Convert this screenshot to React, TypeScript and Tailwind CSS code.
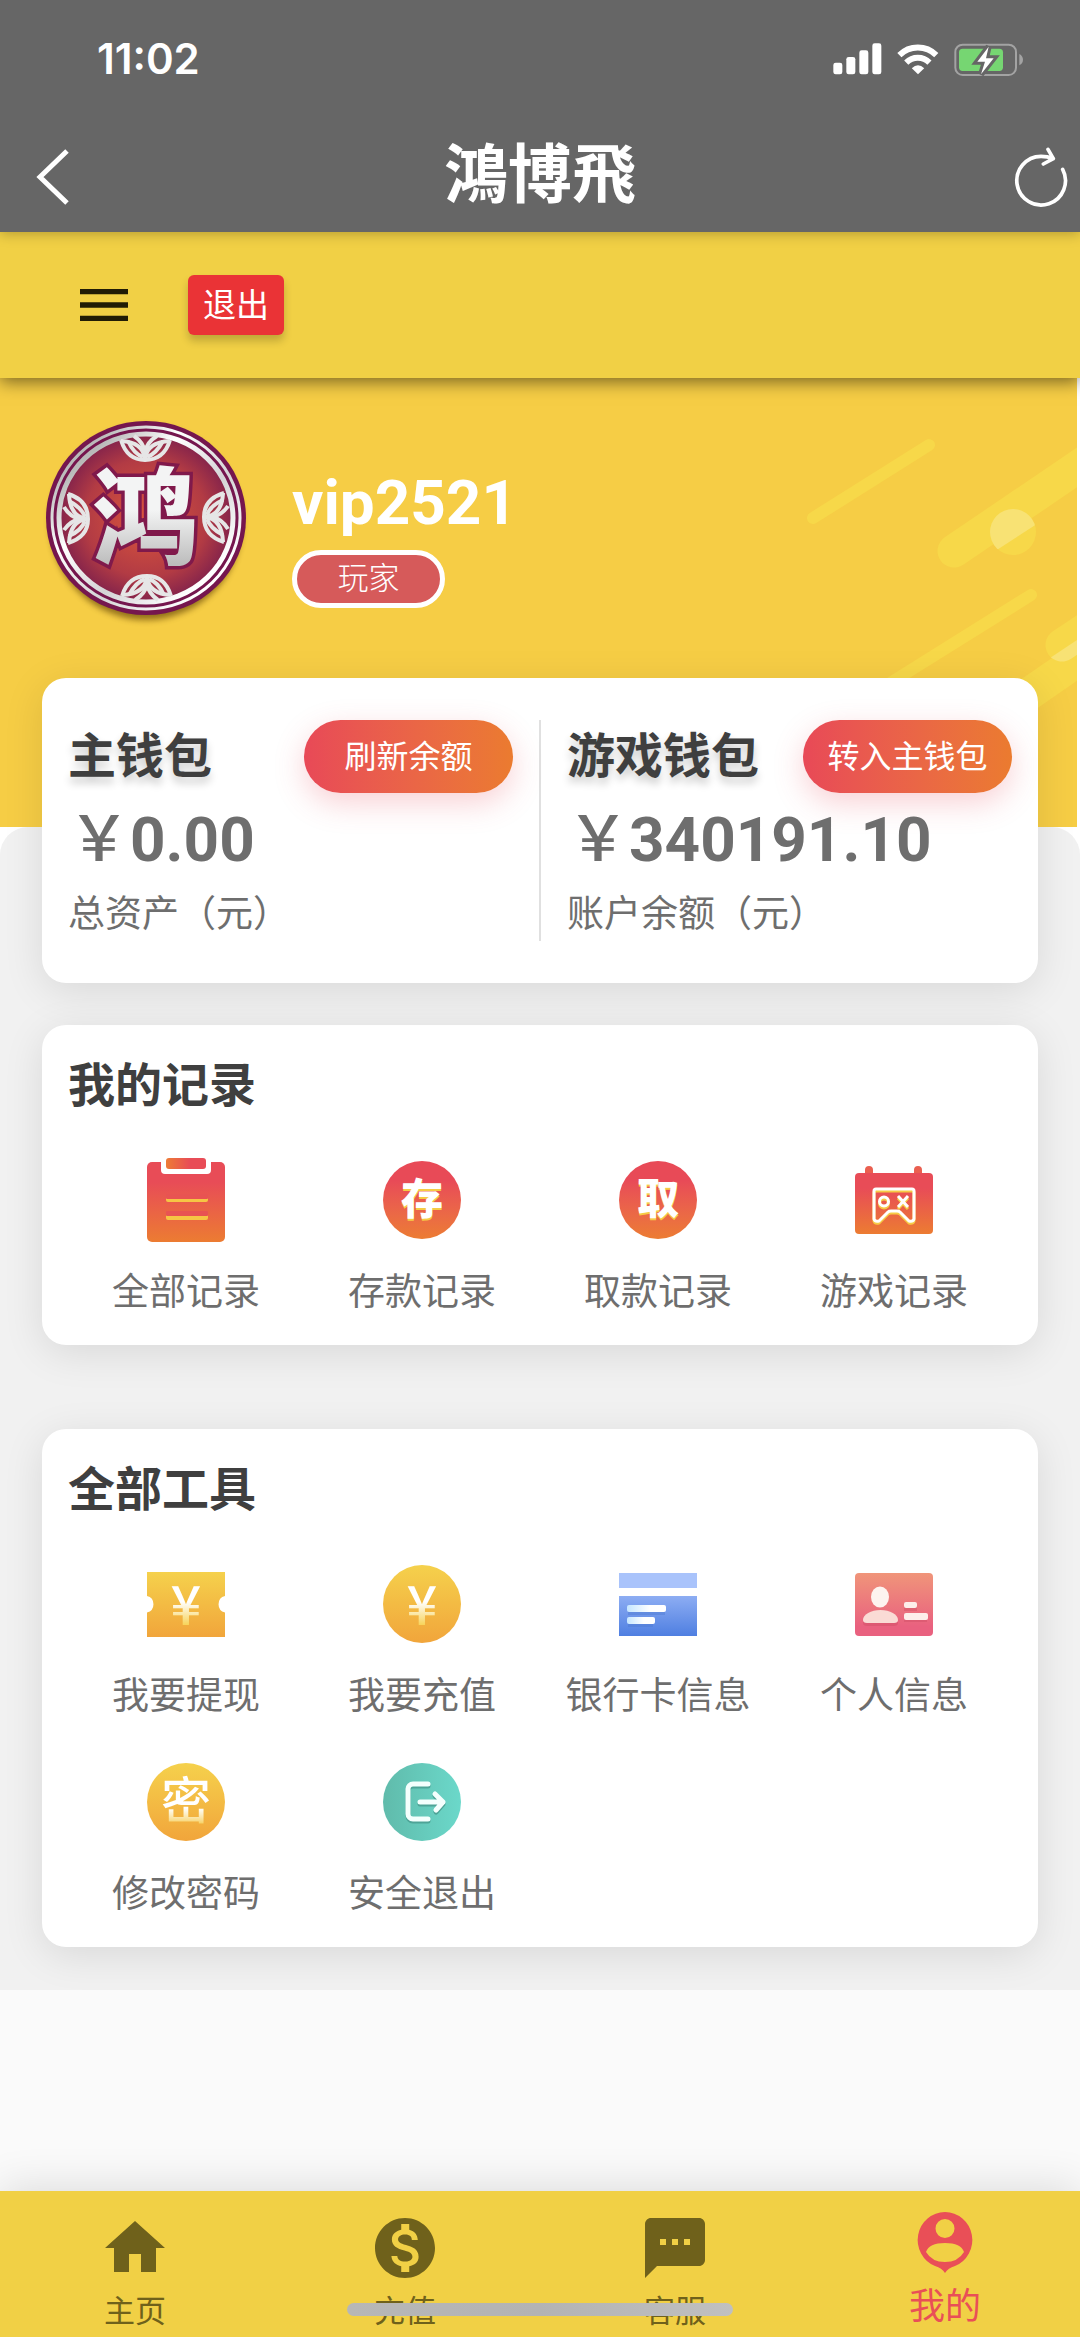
import type { ReactNode } from "react";
import { MdHome, MdMenu, MdMonetizationOn, MdTextsms } from "react-icons/md";

const redOrange = "bg-linear-to-b from-[#e84a57] from-25% to-[#ec7c32]";
const gold = "bg-linear-to-b from-[#f5d14c] to-[#f1a53b]";

function IconBox({ children }: { children: ReactNode }) {
    return (
        <svg viewBox="0 0 84 84" className="size-[84px]" aria-hidden="true">
            {children}
        </svg>
    );
}

// Gradients shared by every icon on the page
function IconGradients() {
    return (
        <svg className="absolute size-0" aria-hidden="true">
            <defs>
                <linearGradient id="red" x1="0" y1="0" x2="0" y2="1">
                    <stop offset="0.25" stopColor="#e84c57" />
                    <stop offset="1" stopColor="#ec7c32" />
                </linearGradient>
                <linearGradient id="gold" x1="0" y1="0" x2="0" y2="1">
                    <stop stopColor="#f5d14c" />
                    <stop offset="1" stopColor="#f1a53b" />
                </linearGradient>
                <linearGradient id="yen" x1="0" y1="0" x2="0" y2="1">
                    <stop offset="0.5" stopColor="#fff" />
                    <stop offset="0.8" stopColor="#f7d358" />
                </linearGradient>
                <linearGradient id="blue" x1="0" y1="0" x2="0" y2="1">
                    <stop stopColor="#8dadf3" />
                    <stop offset="1" stopColor="#4f7fe1" />
                </linearGradient>
                <linearGradient id="shine" x1="0" y1="0" x2="1" y2="0">
                    <stop stopColor="#c5e6ff" />
                    <stop offset="0.6" stopColor="#fff" />
                </linearGradient>
                <linearGradient id="pink" x1="0" y1="0" x2="0" y2="1">
                    <stop stopColor="#f0957a" />
                    <stop offset="0.85" stopColor="#e9617f" />
                </linearGradient>
                <linearGradient id="teal" x1="0" y1="0" x2="1" y2="0">
                    <stop stopColor="#60bbab" />
                    <stop offset="1" stopColor="#6bd8ca" />
                </linearGradient>
                <linearGradient id="tab" x1="0" y1="0" x2="1" y2="0">
                    <stop stopColor="#ed7c36" />
                    <stop offset="0.6" stopColor="#e84c57" />
                </linearGradient>
            </defs>
        </svg>
    );
}

function CharCircle({ char }: { char: string }) {
    return (
        <span className="flex size-[84px] items-center justify-center">
            <span className={`flex size-[78px] items-center justify-center rounded-full ${redOrange}`}>
                <span className="text-[42px] leading-none font-black text-white [text-shadow:0_2px_0_#f6cb45]">{char}</span>
            </span>
        </span>
    );
}

function YenText() {
    return (
        <text x="42" y="63" textAnchor="middle" fill="url(#yen)" className="font-['Noto_Sans_CJK_SC',sans-serif] text-[54px] font-medium">
            ¥
        </text>
    );
}

const records = [
    {
        label: "全部记录",
        icon: (
            <IconBox>
                <rect x="3" y="4" width="78" height="80" rx="5" fill="url(#red)" />
                <path d="M17 0H67V12a4 4 0 0 1-4 4H21a4 4 0 0 1-4-4Z" fill="#fff" />
                <rect x="22" y="0" width="40" height="11" rx="3" fill="url(#tab)" />
                <rect x="22" y="38" width="42" height="6" rx="2" fill="#f6c544" />
                <rect x="22" y="36" width="42" height="5" rx="1" fill="#e85352" />
                <rect x="22" y="56" width="42" height="6" rx="2" fill="#f6c544" />
                <rect x="22" y="53" width="42" height="5" rx="1" fill="#e85352" />
            </IconBox>
        ),
    },
    { label: "存款记录", icon: <CharCircle char="存" /> },
    { label: "取款记录", icon: <CharCircle char="取" /> },
    {
        label: "游戏记录",
        icon: (
            <IconBox>
                <path d="M13 18V12a4 4 0 0 1 8 0v6ZM62 18V12a4 4 0 0 1 8 0v6Z" fill="#ea5f50" />
                <rect x="3" y="15" width="78" height="61" rx="4" fill="url(#red)" />
                {["#f6cb45", "#fff"].map((color, i) => (
                    <g key={color} transform={i ? undefined : "translate(0 2)"} fill="none" stroke={color} strokeWidth="3" strokeLinejoin="round">
                        <path d="M24 31H60a2 2 0 0 1 2 2V61q-1 3-5 2l-9-9q-1-1-3-1h-6q-2 0-3 1l-9 9q-4 1-5-2V33a2 2 0 0 1 2-2Z" />
                        <circle cx="32" cy="43.500" r="4.500" />
                        <path d="M46 38l10 11M56 38L46 49" />
                    </g>
                ))}
            </IconBox>
        ),
    },
];

const tools = [
    {
        label: "我要提现",
        icon: (
            <IconBox>
                <path d="M3 10H81V34a8.500 8.500 0 0 0 0 16.500V75H3V50.500A8.500 8.500 0 0 0 3 34Z" fill="url(#gold)" />
                <YenText />
            </IconBox>
        ),
    },
    {
        label: "我要充值",
        icon: (
            <IconBox>
                <circle cx="42" cy="42" r="39" fill="url(#gold)" />
                <YenText />
            </IconBox>
        ),
    },
    {
        label: "银行卡信息",
        icon: (
            <IconBox>
                <path d="M3 11H81V26H3Z" fill="#a9c3fb" />
                <path d="M3 34H81V74H3Z" fill="url(#blue)" />
                <path d="M12 46H49V53H12ZM12 57H37V65H12Z" fill="#4c78cf" opacity="0.4" />
                <rect x="11" y="43" width="39" height="7" rx="2" fill="url(#shine)" />
                <rect x="11" y="55" width="28" height="7" rx="2" fill="url(#shine)" />
            </IconBox>
        ),
    },
    {
        label: "个人信息",
        icon: (
            <IconBox>
                <rect x="3" y="11" width="78" height="63" rx="4" fill="url(#pink)" />
                <g fill="#c9475f" opacity="0.35" transform="translate(0 3)">
                    <path d="M11 58a17.500 11 0 0 1 35 0q0 3-4 3H15q-4 0-4-3Z" />
                    <path d="M52 40H65V46H52ZM52 51H75V57H52Z" />
                </g>
                <ellipse cx="28" cy="35" rx="9" ry="10.500" fill="#fdf3ef" />
                <path d="M11 58a17.500 10 0 0 1 35 0q0 3-4 3H15q-4 0-4-3Z" fill="#fadbd5" />
                <rect x="52" y="40" width="13" height="6" rx="2" fill="#fdeeea" />
                <rect x="52" y="51" width="24" height="7" rx="2" fill="#fdeeea" />
            </IconBox>
        ),
    },
    {
        label: "修改密码",
        icon: (
            <span className="flex size-[84px] items-center justify-center">
                <span className={`flex size-[78px] items-center justify-center rounded-full ${gold}`}>
                    <span className="bg-linear-to-b from-white from-60% to-[#f6cb40] to-90% bg-clip-text text-[50px] leading-[60px] font-medium text-transparent">
                        密
                    </span>
                </span>
            </span>
        ),
    },
    {
        label: "安全退出",
        icon: (
            <IconBox>
                <circle cx="42" cy="42" r="39" fill="url(#teal)" />
                {["#4ea497", "#f4fffd"].map((color, i) => (
                    <path
                        key={color}
                        transform={i ? undefined : "translate(0 2)"}
                        d="M48 24H33a5 5 0 0 0-5 5V54a5 5 0 0 0 5 5H48M40 42H63M55 34l8 8-7 8"
                        fill="none"
                        stroke={color}
                        strokeWidth="5"
                        strokeLinecap="round"
                        strokeLinejoin="round"
                    />
                ))}
            </IconBox>
        ),
    },
];

const wallets = [
    { title: "主钱包", action: "刷新余额", amount: "0.00", note: "总资产（元）" },
    { title: "游戏钱包", action: "转入主钱包", amount: "340191.10", note: "账户余额（元）" },
];

const tabs = [
    { label: "主页", icon: <MdHome className="size-[72px]" /> },
    { label: "充值", icon: <MdMonetizationOn className="size-[72px]" /> },
    { label: "客服", icon: <MdTextsms className="size-[72px]" /> },
];

function StatusIcons() {
    return (
        <div className="flex items-center gap-[14px]">
            <svg viewBox="38 68 147 96" className="h-8 w-[49px]" fill="#fff" aria-hidden="true">
                <rect x="39" y="127" width="27" height="35" rx="7" />
                <rect x="78" y="110" width="27" height="52" rx="7" />
                <rect x="117" y="90" width="27" height="72" rx="7" />
                <rect x="156" y="69" width="27" height="93" rx="7" />
            </svg>
            <svg viewBox="228 66 132 98" className="h-8 w-[44px]" fill="none" stroke="#fff" strokeWidth="18" aria-hidden="true">
                <path d="M237 103a80 80 0 0 1 113 0M258 126a50 50 0 0 1 71 0" />
                <path d="M275 143q19-17 38 0L294 162Z" fill="#fff" stroke="none" />
            </svg>
            <svg viewBox="404 66 210 99" className="h-[33px] w-[70px]" aria-hidden="true">
                <rect x="408" y="71" width="182" height="91" rx="22" fill="none" stroke="#a3a3a3" strokeWidth="6" />
                <rect x="419" y="83" width="132" height="67" rx="11" fill="#76d672" />
                <path d="M600 99q11 6 11 17t-11 17Z" fill="#a3a3a3" />
                <path d="M508 77L474 122H497L485 160L523 112H500Z" fill="#fff" stroke="#666" strokeWidth="18" />
                <path d="M508 77L474 122H497L485 160L523 112H500Z" fill="#fff" />
            </svg>
        </div>
    );
}

function Emblem() {
    const petals = (
        <g fill="none" stroke="#e6e6e6" strokeWidth="4">
            <path d="M91 40Q97 60 115 60Q134 60 140 40" />
            <path d="M91 41Q113 42 115 59Q117 42 140 41" />
            <path d="M98 41Q104 54 113 57M133 41Q126 54 117 57M104 36Q113 42 115 52Q117 42 127 36" />
        </g>
    );
    return (
        <svg viewBox="0 0 230 230" className="size-[230px] shrink-0" role="img" aria-label="鸿">
            <defs>
                <radialGradient id="core">
                    <stop stopColor="#dc563c" />
                    <stop offset="0.7" stopColor="#b23b44" />
                    <stop offset="1" stopColor="#84234b" />
                </radialGradient>
                <linearGradient id="silver" x1="0" y1="0" x2="1" y2="1">
                    <stop offset="0.15" stopColor="#b9b9b9" />
                    <stop offset="0.35" stopColor="#fff" />
                    <stop offset="0.6" stopColor="#d4d4d6" />
                    <stop offset="0.85" stopColor="#fff" />
                </linearGradient>
                <linearGradient id="glyph" x1="0" y1="0" x2="0" y2="1">
                    <stop offset="0.5" stopColor="#f3f4f4" />
                    <stop offset="0.85" stopColor="#bdbdbd" />
                </linearGradient>
            </defs>
            <ellipse cx="116" cy="123" rx="96" ry="97" fill="#7a5a10" opacity="0.8" className="blur-[3px]" />
            <ellipse cx="116" cy="118" rx="100" ry="97" fill="#75164e" />
            <ellipse cx="116" cy="118" rx="94" ry="91" fill="none" stroke="url(#silver)" strokeWidth="3" />
            <ellipse cx="116" cy="118" rx="87" ry="84" fill="url(#core)" stroke="url(#silver)" strokeWidth="5" />
            {petals}
            <g transform="rotate(180 116 118)">{petals}</g>
            <g transform="rotate(90 116 118)">{petals}</g>
            <g transform="rotate(-90 116 118)">{petals}</g>
            <text
                x="115"
                y="156"
                textAnchor="middle"
                fill="url(#glyph)"
                stroke="#80194b"
                strokeWidth="7"
                paintOrder="stroke"
                className="font-['Noto_Sans_CJK_SC',sans-serif] text-[106px] font-black"
            >
                鸿
            </text>
        </svg>
    );
}

function HeroStripes() {
    return (
        <svg viewBox="0 0 320 449" className="absolute top-0 right-0 h-full w-[320px]" stroke="#f7d849" strokeLinecap="round" aria-hidden="true">
            <defs>
                <clipPath id="dotTop">
                    <path d="M160 130L320 20V120L209 192Z" />
                </clipPath>
                <clipPath id="dotBottom">
                    <path d="M290 282L320 262V300H290Z" />
                </clipPath>
            </defs>
            <path d="M56 140L172 67M274 217L130 307" strokeWidth="12" />
            <path d="M197 173L350 69M305 267L350 237M240 338L350 262" strokeWidth="33" />
            <circle cx="256" cy="154" r="23" fill="#f7d849" stroke="none" />
            <circle cx="256" cy="154" r="23" fill="#f8e274" stroke="none" clipPath="url(#dotTop)" />
            <path d="M305 267L350 237" stroke="#f8e274" strokeWidth="33" clipPath="url(#dotBottom)" />
        </svg>
    );
}

function MenuCard({ title, items }: { title: string; items: { label: string; icon: ReactNode }[] }) {
    return (
        <section className="rounded-3xl bg-white px-[26px] pt-[29px] pb-[27px] shadow-[0_8px_40px_rgba(0,0,0,0.1)]">
            <h2 className="text-[47px] leading-[64px] font-semibold text-[#3f3f3f]">{title}</h2>
            <div className="mt-10 grid grid-cols-4 gap-y-[38px]">
                {items.map((item) => (
                    <a key={item.label} href="#" className="flex flex-col items-center gap-[26px]">
                        {item.icon}
                        <span className="text-[37px] leading-[50px] whitespace-nowrap text-[#6e6e6e]">{item.label}</span>
                    </a>
                ))}
            </div>
        </section>
    );
}

export default function App() {
    return (
        <div className="flex min-h-screen flex-col bg-[#fafafa] font-[Roboto,'Noto_Sans_CJK_SC',sans-serif]">
            <IconGradients />
            {/* Status bar + webview title */}
            <header className="relative z-20 bg-[#666] text-white shadow-[0_2px_12px_rgba(0,0,0,0.25)]">
                <div className="flex h-[118px] items-center justify-between pr-14 pl-[97px]">
                    <span className="font-[Inter,sans-serif] text-[42px] leading-none font-semibold">11:02</span>
                    <StatusIcons />
                </div>
                <div className="grid h-[114px] grid-cols-[1fr_auto_1fr] items-center px-3">
                    <button type="button" aria-label="返回" className="justify-self-start pt-1 pl-6">
                        <svg viewBox="0 0 34 56" className="h-14 w-[34px]" fill="none" stroke="#fff" strokeWidth="5" aria-hidden="true">
                            <path d="M31 2L4 28L31 54" />
                        </svg>
                    </button>
                    <h1 className="pb-3 font-['Noto_Sans_CJK_TC',sans-serif] text-[64px] leading-[96px] font-semibold">鴻博飛</h1>
                    <button type="button" aria-label="刷新" className="justify-self-end pt-1">
                        <svg viewBox="582 379 162 180" className="h-[60px] w-[54px]" fill="none" stroke="#fff" strokeWidth="11" strokeLinecap="round" strokeLinejoin="round" aria-hidden="true">
                            <path d="M728 446A73 73 0 1 1 663 407Q682 407 700 414M684 386L700 414L670 430" />
                        </svg>
                    </button>
                </div>
            </header>

            <div className="relative z-10 flex h-[146px] items-center gap-[52px] bg-[#f1d045] pl-[72px] shadow-[0_4px_16px_rgba(0,0,0,0.5)]">
                <button type="button" aria-label="菜单">
                    <MdMenu className="size-16 text-[#211c05]" />
                </button>
                <button type="button" className="h-[60px] rounded-md bg-[#ea3336] px-[15px] pt-[2px] text-[33px] leading-[58px] text-white shadow-[0_6px_8px_rgba(0,0,0,0.2)]">
                    退出
                </button>
            </div>

            <main className="bg-white">
                <div className="pr-[3px]">
                    <div className="relative flex h-[449px] gap-8 bg-[#f6cd45] pt-[22px] pl-[30px]">
                        <HeroStripes />
                        <Emblem />
                        <div className="pt-[67px]">
                            <p className="text-[62px] leading-[72px] font-bold text-white">vip2521</p>
                            <span className="mt-[11px] flex h-[58px] w-[153px] items-center justify-center rounded-full border-[5px] border-white bg-[#d65a5a] text-[31px] font-light text-white">
                                玩家
                            </span>
                        </div>
                    </div>
                </div>

                <div className="rounded-t-[28px] bg-[#f1f1f1] px-[42px] pb-[43px]">
                    <section className="relative -top-[149px] -mb-[107px] flex rounded-3xl bg-white py-[42px] shadow-[0_8px_40px_rgba(0,0,0,0.1)]">
                        {wallets.map((wallet) => (
                            <div key={wallet.title} className="h-[221px] flex-1 px-[26px] first:border-r-2 first:border-[#e0e0e0]">
                                <div className="flex h-[73px] items-center justify-between">
                                    <h2 className="text-[48px] leading-[64px] font-semibold text-[#3f3f3f] [text-shadow:0_6px_8px_rgba(0,0,0,0.2)]">{wallet.title}</h2>
                                    <button
                                        type="button"
                                        className="h-[73px] w-[209px] rounded-full bg-linear-to-r from-[#e84957] to-[#eb7b2f] text-[32px] text-white shadow-[0_10px_30px_rgba(232,73,87,0.25)]"
                                    >
                                        {wallet.action}
                                    </button>
                                </div>
                                <p className="mt-[11px] text-[62px] leading-[72px] font-bold text-[#6e6e6e]">
                                    <span className="font-medium">￥</span>
                                    {wallet.amount}
                                </p>
                                <p className="mt-[14px] text-[37px] leading-[50px] text-[#6e6e6e]">{wallet.note}</p>
                            </div>
                        ))}
                    </section>
                    <div className="flex flex-col gap-[84px]">
                        <MenuCard title="我的记录" items={records} />
                        <MenuCard title="全部工具" items={tools} />
                    </div>
                </div>
            </main>

            <nav className="relative mt-auto grid h-[146px] grid-cols-4 bg-[#f1d045] text-[#6f611b] shadow-[0_-4px_40px_rgba(0,0,0,0.12)]">
                {tabs.map((tab) => (
                    <a key={tab.label} href="#" className="flex flex-col items-center gap-[6px] pt-[21px]">
                        {tab.icon}
                        <span className="text-[31px] leading-[44px]">{tab.label}</span>
                    </a>
                ))}
                <a href="#" className="flex flex-col items-center gap-[6px] pt-4 text-[#e94f57]">
                    <svg viewBox="0 0 72 72" className="size-[72px]" fill="currentColor" fillRule="evenodd" aria-hidden="true">
                        <path d="M36 5A27.500 28 0 0 1 46 59Q39 61 36 66Q33 61 26 59A27.500 28 0 0 1 36 5ZM36 12a9.500 9.500 0 0 0 0 19a9.500 9.500 0 0 0 0-19ZM17 45Q23 55 36 55Q49 55 55 45Q52 36 36 36Q20 36 17 45Z" />
                    </svg>
                    <span className="text-[36px] leading-[44px]">我的</span>
                </a>
                {/* Home indicator */}
                <div className="absolute bottom-[21px] left-1/2 h-[13px] w-[386px] -translate-x-1/2 rounded-full bg-linear-to-r from-[#b7b7b7] via-[#b3b3b3] to-[#c0c0c0]" />
            </nav>
        </div>
    );
}
